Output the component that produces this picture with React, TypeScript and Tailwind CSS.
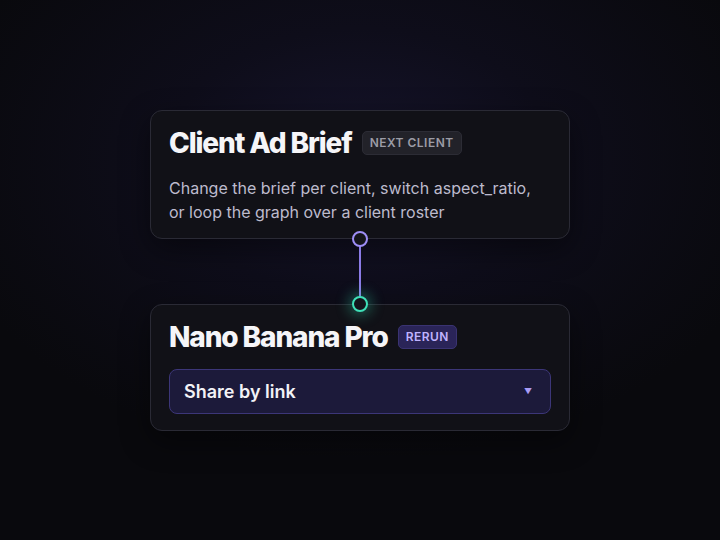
export default function App() {
  return (
    <div
      className="flex h-[540px] w-[720px] flex-col items-center justify-center bg-[#09090d] bg-[radial-gradient(ellipse_60%_55%_at_50%_30%,#16142c_0%,#0e0d1a_45%,#09090d_100%)]"
      style={{ fontFamily: "Inter, 'Noto Sans', sans-serif" }}
    >
      {/* top node */}
      <div className="w-[420px] rounded-[12px] border border-[#2a2a35] bg-[#111117] px-[18px] pb-[14px] pt-[14px] shadow-[0_10px_30px_rgba(0,0,0,0.45)]">
        <div className="flex h-9 items-center gap-[10px]">
          <h2 className="text-[28px] font-extrabold tracking-[-0.04em] text-[#f5f5f8]">
            Client Ad Brief
          </h2>
          <span className="rounded-[5px] border border-[#2c2c35] bg-[#222229] px-[7px] py-[4px] text-[12px] font-semibold leading-[14px] tracking-[0.04em] text-[#9c9ca6]">
            NEXT CLIENT
          </span>
        </div>
        <p className="mt-[15px] text-[16px] leading-6 text-[#bdbbcd]">
          Change the brief per client, switch aspect_ratio,
          <br />
          or loop the graph over a client roster
        </p>
      </div>

      {/* connector */}
      <div className="relative z-10 flex h-[65px] w-[16px] justify-center">
        <div className="h-full w-[2px] bg-[#8b7be6]" />
        <span className="absolute -top-[8px] left-0 h-[16px] w-[16px] rounded-full border-[2.5px] border-[#9d8df5] bg-[#14141b]" />
        <span className="absolute -bottom-[8px] left-0 h-[16px] w-[16px] rounded-full border-[2.5px] border-[#3fe0b8] bg-[#14141b] shadow-[0_0_14px_3px_rgba(52,211,170,0.4)]" />
      </div>

      {/* bottom node */}
      <div className="w-[420px] rounded-[12px] border border-[#2a2a35] bg-[#111117] px-[18px] pb-[16px] pt-[14px] shadow-[0_10px_30px_rgba(0,0,0,0.45)]">
        <div className="flex h-9 items-center gap-[10px]">
          <h2 className="text-[28px] font-extrabold tracking-[-0.04em] text-[#f5f5f8]">
            Nano Banana Pro
          </h2>
          <span className="rounded-[5px] border border-[#3a3372] bg-[#2a2458] px-[7px] py-[4px] text-[12px] font-semibold leading-[14px] tracking-[0.04em] text-[#c0b3ff]">
            RERUN
          </span>
        </div>
        <div className="mt-[14px] flex h-[45px] items-center justify-between rounded-[8px] border-[1.5px] border-[#3c3678] bg-[#1c1a3a] pl-[14px] pr-[18px]">
          <span className="text-[18px] font-semibold text-[#f2f2f6]">Share by link</span>
          <span className="text-[8px] text-[#a99cf5]">▼</span>
        </div>
      </div>
    </div>
  );
}
